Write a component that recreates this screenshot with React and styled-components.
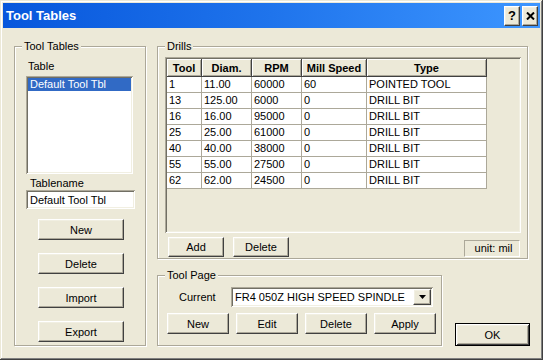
import React from "react";
import styled, { createGlobalStyle, css } from "styled-components";

const GlobalStyle = createGlobalStyle`
  html, body {
    margin: 0;
    padding: 0;
    background: #ece9d8;
  }
  body {
    font-family: "Liberation Sans", Arial, sans-serif;
    font-size: 11px;
    color: #000;
  }
`;

// classic 3d edges
const raised = css`
  border: 1px solid;
  border-color: #fff #404040 #404040 #fff;
  box-shadow: inset -1px -1px 0 #aca899, inset 1px 1px 0 #f1efe2;
`;

const sunken = css`
  box-shadow: inset 1px 1px 0 #aca899, inset -1px -1px 0 #fff,
    inset 2px 2px 0 #716f64, inset -2px -2px 0 #f1efe2;
`;

const drills = [
  { tool: "1", diam: "11.00", rpm: "60000", mill: "60", type: "POINTED TOOL" },
  { tool: "13", diam: "125.00", rpm: "6000", mill: "0", type: "DRILL BIT" },
  { tool: "16", diam: "16.00", rpm: "95000", mill: "0", type: "DRILL BIT" },
  { tool: "25", diam: "25.00", rpm: "61000", mill: "0", type: "DRILL BIT" },
  { tool: "40", diam: "40.00", rpm: "38000", mill: "0", type: "DRILL BIT" },
  { tool: "55", diam: "55.00", rpm: "27500", mill: "0", type: "DRILL BIT" },
  { tool: "62", diam: "62.00", rpm: "24500", mill: "0", type: "DRILL BIT" },
];

const columns = [
  { key: "tool", label: "Tool", w: 35 },
  { key: "diam", label: "Diam.", w: 50 },
  { key: "rpm", label: "RPM", w: 50 },
  { key: "mill", label: "Mill Speed", w: 65 },
  { key: "type", label: "Type", w: 120 },
];

const App = () => {
  return (
    <>
      <GlobalStyle />
      <Window>
        <TitleBar>
          <Title>Tool Tables</Title>
          <CaptionButton>?</CaptionButton>
          <CaptionButton>
            <svg width="9" height="8" viewBox="0 0 9 8">
              <path d="M1 0.5 L8 7.5 M8 0.5 L1 7.5" stroke="#000" strokeWidth="2" />
            </svg>
          </CaptionButton>
        </TitleBar>

        <Body>
          <LeftGroup>
            <Legend>Tool Tables</Legend>
            <FieldLabel $indent={2}>Table</FieldLabel>
            <ListBox>
              <ListItem $selected>Default Tool Tbl</ListItem>
            </ListBox>
            <FieldLabel $indent={4} $top={3}>Tablename</FieldLabel>
            <TextInput readOnly value="Default Tool Tbl" />
            <ButtonStack>
              <Button $w={86}>New</Button>
              <Button $w={86}>Delete</Button>
              <Button $w={86}>Import</Button>
              <Button $w={86}>Export</Button>
            </ButtonStack>
          </LeftGroup>

          <RightCol>
            <DrillsGroup>
              <Legend>Drills</Legend>
              <Grid>
                <Table>
                  <thead>
                    <tr>
                      {columns.map((c) => (
                        <Th key={c.key} $w={c.w}>{c.label}</Th>
                      ))}
                    </tr>
                  </thead>
                  <tbody>
                    {drills.map((r) => (
                      <tr key={r.tool}>
                        {columns.map((c) => (
                          <Td key={c.key}>{r[c.key]}</Td>
                        ))}
                      </tr>
                    ))}
                  </tbody>
                </Table>
              </Grid>
              <FooterRow>
                <Button $w={56} $h={20}>Add</Button>
                <Button $w={56} $h={20}>Delete</Button>
                <UnitBox>unit: mil</UnitBox>
              </FooterRow>
            </DrillsGroup>

            <BottomRow>
              <ToolPageGroup>
                <Legend>Tool Page</Legend>
                <ComboRow>
                  <ComboLabel>Current</ComboLabel>
                  <Combo>
                    <ComboText>FR4 050Z HIGH SPEED SPINDLE</ComboText>
                    <DropButton>
                      <svg width="7" height="4" viewBox="0 0 7 4">
                        <polygon points="0,0 7,0 3.5,4" fill="#000" />
                      </svg>
                    </DropButton>
                  </Combo>
                </ComboRow>
                <ButtonRow>
                  <Button $w={62}>New</Button>
                  <Button $w={62}>Edit</Button>
                  <Button $w={62}>Delete</Button>
                  <Button $w={62}>Apply</Button>
                </ButtonRow>
              </ToolPageGroup>
              <DefaultButton>OK</DefaultButton>
            </BottomRow>
          </RightCol>
        </Body>
      </Window>
    </>
  );
};

export default App;

const Window = styled.div`
  width: 543px;
  height: 360px;
  box-sizing: border-box;
  padding: 3px;
  background: #ece9d8;
  box-shadow: inset -1px -1px 0 #404040, inset 1px 1px 0 #ece9d8,
    inset -2px -2px 0 #808080, inset 2px 2px 0 #fff;
  display: flex;
  flex-direction: column;
`;

const TitleBar = styled.div`
  flex: none;
  height: 25px;
  display: flex;
  align-items: center;
  gap: 2px;
  padding: 0 2px;
  background: linear-gradient(90deg, #0757dc 0%, #1f74ec 50%, #3d96ff 100%);
  color: #fff;
  font: bold 13px "Liberation Sans", Arial, sans-serif;
`;

const Title = styled.span`
  flex: 1;
  padding-left: 1px;
`;

const CaptionButton = styled.button`
  box-sizing: border-box;
  width: 16px;
  height: 20px;
  margin: 0;
  padding: 0;
  display: flex;
  align-items: center;
  justify-content: center;
  background: #ece9d8;
  color: #000;
  font: bold 13px "Liberation Sans", Arial, sans-serif;
  ${raised}
`;

const Body = styled.div`
  flex: 1;
  min-height: 0;
  display: flex;
  gap: 11px;
  padding: 18px 10px 11px 11px;
`;

const Group = styled.div`
  position: relative;
  box-sizing: border-box;
  border: 1px solid #aca899;
  box-shadow: inset 1px 1px 0 #fff, 1px 1px 0 #fff;
`;

const Legend = styled.span`
  position: absolute;
  top: -7px;
  left: 7px;
  padding: 0 2px;
  line-height: 13px;
  background: #ece9d8;
`;

const LeftGroup = styled(Group)`
  width: 132px;
  display: flex;
  flex-direction: column;
  align-items: flex-start;
  padding: 13px 0 0 11px;
`;

const FieldLabel = styled.div`
  line-height: 13px;
  margin: ${(p) => p.$top || 0}px 0 0 ${(p) => p.$indent}px;
  padding-bottom: ${(p) => (p.$top ? 0 : 3)}px;
`;

const ListBox = styled.div`
  box-sizing: border-box;
  width: 107px;
  height: 98px;
  padding: 2px;
  background: #fff;
  ${sunken}
`;

const ListItem = styled.div`
  height: 13px;
  line-height: 13px;
  padding-left: 2px;
  background: ${(p) => (p.$selected ? "#316ac5" : "transparent")};
  color: ${(p) => (p.$selected ? "#fff" : "#000")};
`;

const TextInput = styled.input`
  box-sizing: border-box;
  width: 109px;
  height: 19px;
  margin: 0;
  padding: 0 2px 0 4px;
  border: none;
  outline: none;
  background: #fff;
  font: 11px "Liberation Sans", Arial, sans-serif;
  color: #000;
  ${sunken}
`;

const ButtonStack = styled.div`
  display: flex;
  flex-direction: column;
  gap: 13px;
  margin-top: 10px;
  padding-left: 12px;
`;

const Button = styled.button`
  box-sizing: border-box;
  width: ${(p) => p.$w}px;
  height: ${(p) => p.$h || 21}px;
  margin: 0;
  padding: 0;
  background: #ece9d8;
  color: #000;
  font: 11px "Liberation Sans", Arial, sans-serif;
  ${raised}
`;

const DefaultButton = styled.button`
  box-sizing: border-box;
  width: 75px;
  height: 23px;
  margin: 0;
  padding: 0;
  background: #ece9d8;
  color: #000;
  font: 11px "Liberation Sans", Arial, sans-serif;
  border: 1px solid #000;
  box-shadow: inset 1px 1px 0 #fff, inset -1px -1px 0 #404040,
    inset 2px 2px 0 #f1efe2, inset -2px -2px 0 #aca899;
`;

const RightCol = styled.div`
  width: 373px;
  display: flex;
  flex-direction: column;
`;

const DrillsGroup = styled(Group)`
  width: 371px;
  height: 213px;
  padding: 10px 7px 1px 7px;
  display: flex;
  flex-direction: column;
`;

const Grid = styled.div`
  box-sizing: border-box;
  width: 356px;
  height: 176px;
  padding: 2px;
  overflow: hidden;
  background: #ece9d8;
  ${sunken}
`;

const Table = styled.table`
  width: 320px;
  table-layout: fixed;
  border-collapse: separate;
  border-spacing: 0;
  font: 11px "Liberation Sans", Arial, sans-serif;
`;

const Th = styled.th`
  box-sizing: border-box;
  width: ${(p) => p.$w}px;
  height: 18px;
  padding: 0;
  background: #ece9d8;
  font-weight: bold;
  text-align: center;
  border-right: 1px solid #404040;
  border-bottom: 1px solid #404040;
  box-shadow: inset 1px 1px 0 #fff, inset -1px -1px 0 #aca899;
`;

const Td = styled.td`
  box-sizing: border-box;
  height: 16px;
  padding: 0 0 0 2px;
  line-height: 15px;
  white-space: nowrap;
  overflow: hidden;
  background: #fff;
  border-right: 1px solid #aca899;
  border-bottom: 1px solid #aca899;
`;

const FooterRow = styled.div`
  display: flex;
  align-items: flex-end;
  gap: 9px;
  margin-top: 4px;
  padding-left: 3px;
`;

const UnitBox = styled.div`
  box-sizing: border-box;
  width: 56px;
  height: 17px;
  margin-left: auto;
  line-height: 15px;
  text-align: center;
  padding-left: 3px;
  border: 1px solid;
  border-color: #aca899 #fff #fff #aca899;
`;

const BottomRow = styled.div`
  display: flex;
  align-items: flex-end;
  justify-content: space-between;
  margin-top: 16px;
`;

const ToolPageGroup = styled(Group)`
  width: 285px;
  height: 71px;
  padding: 11px 0 0 9px;
`;

const ComboRow = styled.div`
  display: flex;
  align-items: center;
  height: 20px;
`;

const ComboLabel = styled.span`
  box-sizing: border-box;
  width: 64px;
  padding-left: 12px;
`;

const Combo = styled.div`
  box-sizing: border-box;
  width: 202px;
  height: 20px;
  padding: 2px;
  display: flex;
  align-items: center;
  background: #fff;
  ${sunken}
`;

const ComboText = styled.span`
  flex: 1;
  padding-left: 2px;
  white-space: nowrap;
  overflow: hidden;
`;

const DropButton = styled.span`
  box-sizing: border-box;
  width: 18px;
  height: 16px;
  display: flex;
  align-items: center;
  justify-content: center;
  background: #ece9d8;
  ${raised}
`;

const ButtonRow = styled.div`
  display: flex;
  gap: 7px;
  margin-top: 6px;
`;
